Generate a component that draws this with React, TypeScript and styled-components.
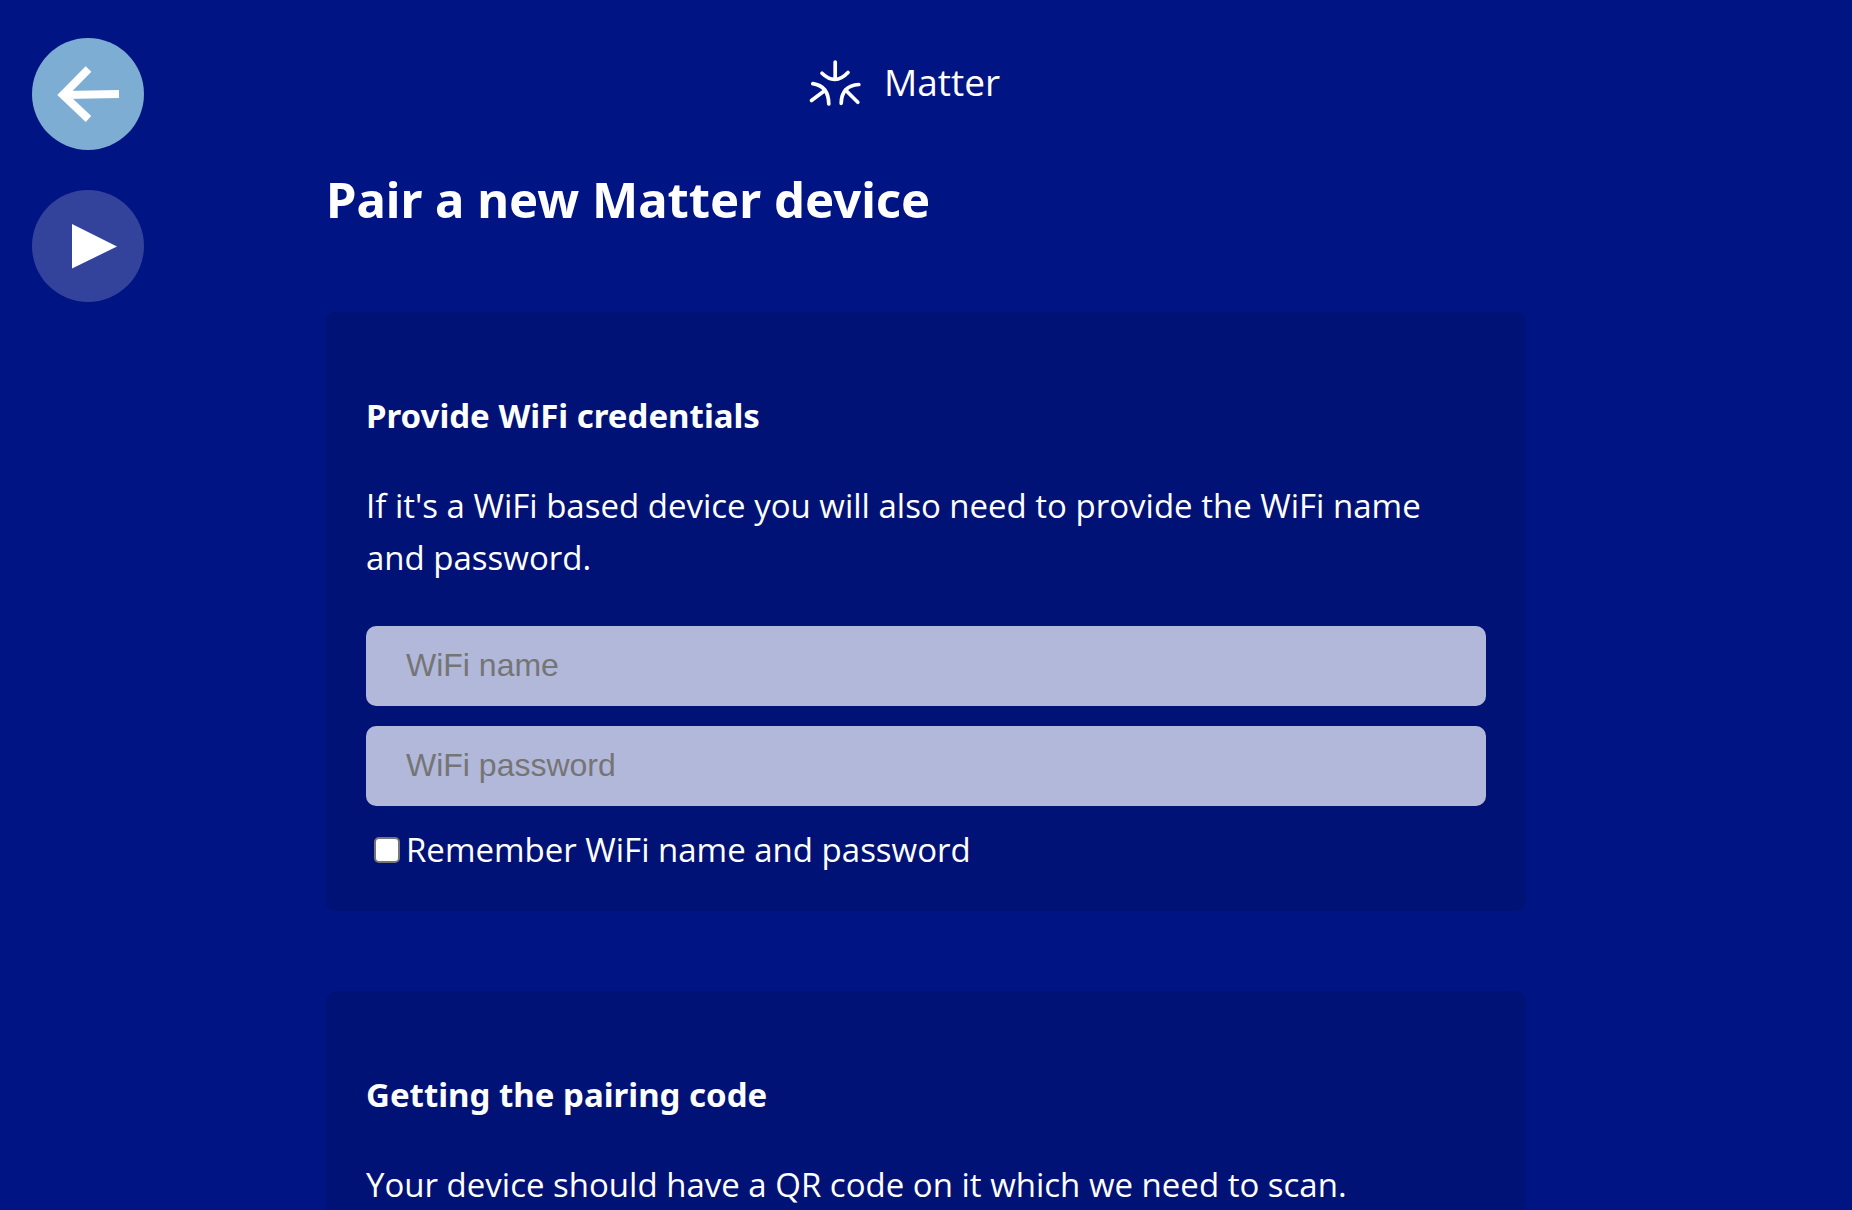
import React, { useState } from "react";
import styled, { createGlobalStyle } from "styled-components";

const GlobalStyle = createGlobalStyle`
  *, *::before, *::after { box-sizing: border-box; }
  body {
    margin: 0;
    background: #001483;
    color: #fff;
    font-family: "Open Sans", "Noto Sans", sans-serif;
    font-size: 33px;
    font-weight: 450;
    line-height: 52px;
  }
`;

const Screen = styled.div`
  display: grid;
  grid-template-columns: 176px minmax(0, 1fr) 176px;
  height: 100vh;
  overflow: hidden;
`;

const SideNav = styled.nav`
  display: flex;
  flex-direction: column;
  align-items: flex-start;
  gap: 40px;
  padding: 38px 32px;
`;

const RoundButton = styled.button<{ $tone: string }>`
  width: 112px;
  height: 112px;
  padding: 0;
  border: 0;
  border-radius: 50%;
  background: ${(p) => p.$tone};
  cursor: pointer;

  svg {
    display: block;
  }
`;

const Content = styled.main`
  display: flex;
  flex-direction: column;
  width: 100%;
  max-width: 1200px;
  margin: 0 auto;
`;

const Header = styled.header`
  display: flex;
  justify-content: center;
  align-items: center;
  gap: 20px;
  height: 167px;
  padding: 0 42px 3px 0;
  font-size: 37px;

  svg {
    overflow: visible;
  }
`;

const Title = styled.h1`
  margin: 0 0 81px;
  font-family: "Noto Sans", sans-serif;
  font-size: 49px;
  line-height: 64px;
  font-weight: 700;
`;

const Card = styled.section`
  flex: none;
  margin-bottom: 80px;
  padding: 78px 40px 35px;
  border-radius: 10px;
  background: #001275;
`;

const CardTitle = styled.h2`
  margin: 0 0 38px;
  font-family: "Noto Sans", sans-serif;
  font-size: 33px;
  line-height: 52px;
  font-weight: 700;
`;

const Text = styled.p`
  margin: 0 0 42px;
`;

const Fields = styled.div`
  display: flex;
  flex-direction: column;
  gap: 20px;
  margin-bottom: 18px;
`;

const Field = styled.input`
  width: 100%;
  height: 80px;
  padding: 0 40px 2px;
  border: 0;
  border-radius: 10px;
  background: #b2b8d9;
  color: #001275;
  font-family: "Liberation Sans", Arial, sans-serif;
  font-size: 32px;

  &::placeholder {
    color: #757575;
    opacity: 1;
  }
`;

const CheckRow = styled.label`
  display: flex;
  align-items: center;
  gap: 6px;
  padding-left: 8px;
`;

const Checkbox = styled.input`
  appearance: none;
  width: 26px;
  height: 26px;
  margin: 0;
  border: 2px solid #767676;
  border-radius: 5px;
  background: #fff;

  &:checked {
    background: #7eadd3;
  }
`;

const MatterLogo = () => (
  <svg width="54" height="48" viewBox="0 0 54 48" fill="none" stroke="#fff" strokeWidth="3.7" strokeLinecap="round" aria-hidden="true">
    <path d="M25.2 4v17" />
    <path d="M12 15.3Q25 28 38 14.5" />
    <path d="M2.8 25.7Q18.500 28 18.8 46" />
    <path d="M1.500 42.500L14.500 32.7" />
    <path d="M48.8 26.500Q31.500 27.500 31.2 45.300" />
    <path d="M35.500 32L47.8 44.300" />
  </svg>
);

export default function App() {
  const [remember, setRemember] = useState(false);

  return (
    <>
      <GlobalStyle />
      <Screen>
        <SideNav aria-label="Navigation">
          <RoundButton type="button" $tone="#7eadd3" aria-label="Back">
            <svg width="112" height="112" viewBox="0 0 112 112" fill="none" stroke="#fff" strokeWidth="8" aria-hidden="true">
              <path d="M56.500 31L31 57l25.500 24M33 57l54-1" />
            </svg>
          </RoundButton>
          <RoundButton type="button" $tone="#33439c" aria-label="Play">
            <svg width="112" height="112" viewBox="0 0 112 112" fill="#fff" aria-hidden="true">
              <path d="M40 34l45 22.500L40 78.500z" />
            </svg>
          </RoundButton>
        </SideNav>
        <Content>
          <Header>
            <MatterLogo />
            <span>Matter</span>
          </Header>
          <Title>Pair a new Matter device</Title>
          <Card>
            <CardTitle>Provide WiFi credentials</CardTitle>
            <Text>If it's a WiFi based device you will also need to provide the WiFi name and password.</Text>
            <Fields>
              <Field type="text" placeholder="WiFi name" aria-label="WiFi name" />
              <Field type="password" placeholder="WiFi password" aria-label="WiFi password" />
            </Fields>
            <CheckRow>
              <Checkbox type="checkbox" checked={remember} onChange={(e) => setRemember(e.target.checked)} />
              Remember WiFi name and password
            </CheckRow>
          </Card>
          <Card>
            <CardTitle>Getting the pairing code</CardTitle>
            <Text>Your device should have a QR code on it which we need to scan.</Text>
          </Card>
        </Content>
      </Screen>
    </>
  );
}
